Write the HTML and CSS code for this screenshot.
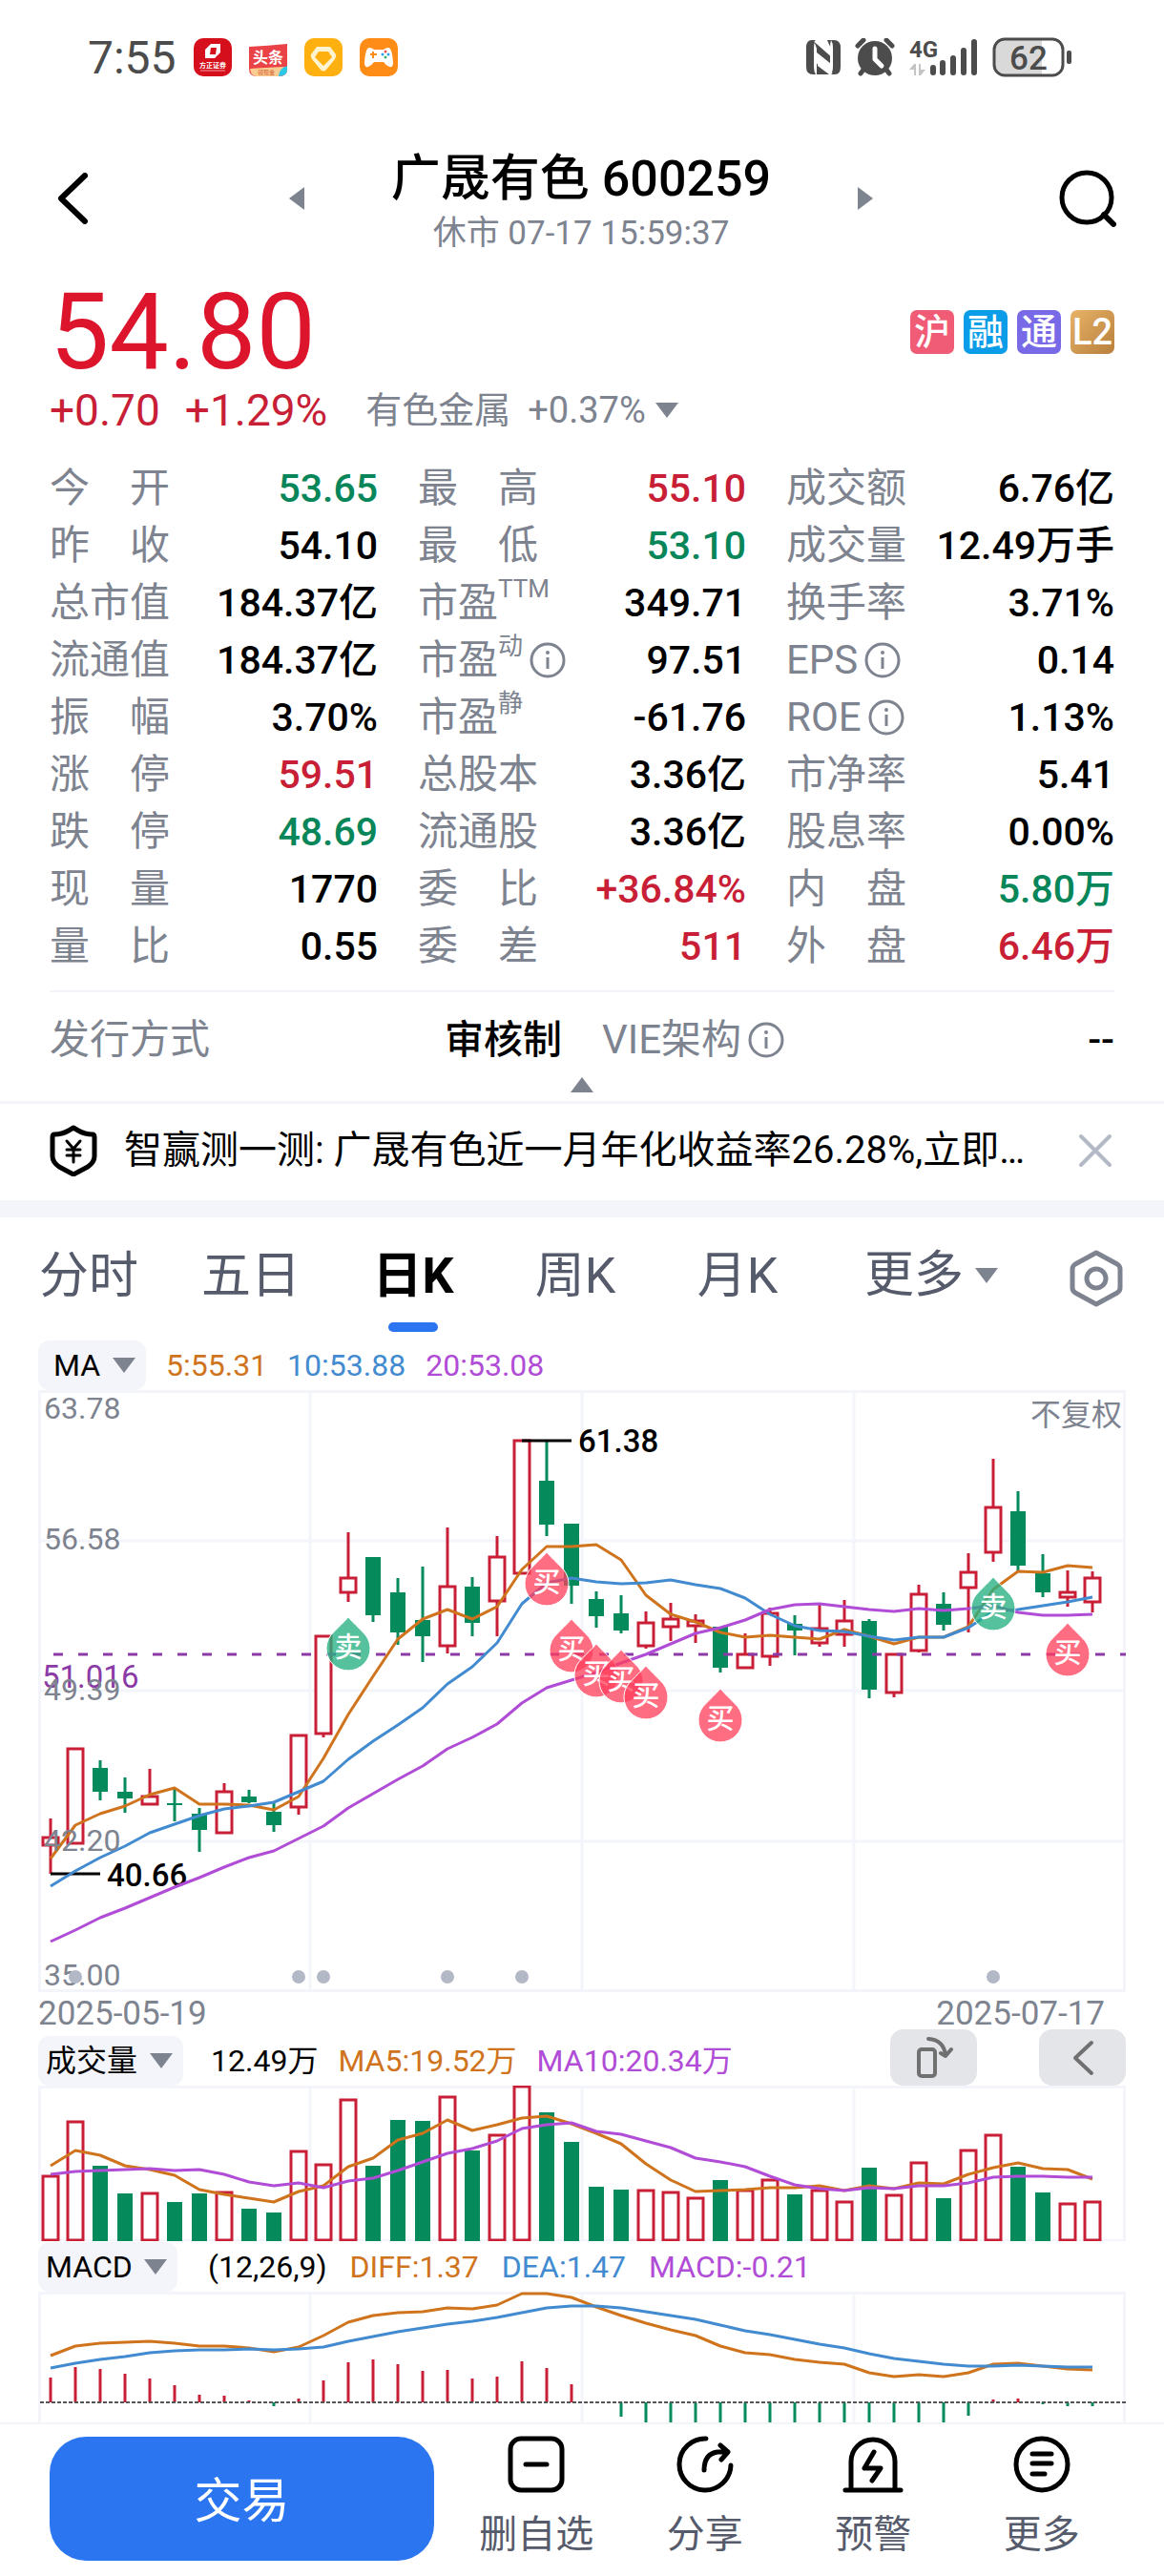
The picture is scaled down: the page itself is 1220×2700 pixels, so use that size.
FILE: index.html
```html
<!DOCTYPE html>
<html lang="zh-CN">
<head>
  <meta charset="UTF-8">
  <meta name="viewport" content="width=device-width, initial-scale=1.0">
  <title>广晟有色 600259</title>
  <link rel="stylesheet" href="styles.css">
</head>
<body>
  <div class="status-bar">
    <div class="status-left">
      <span class="clock">7:55</span>
      <svg class="app-icon" viewBox="0 0 40 40">
        <rect width="40" height="40" rx="10" fill="#d50f1c"/>
        <path d="M18 6h10v9l-6 6H12v-9z" fill="#fff"/>
        <path d="M18 10h6l-1 7h-6z" fill="#d50f1c"/>
        <text x="20" y="31" font-size="7" font-weight="700" fill="#fff" text-anchor="middle">方正证券</text>
        <path d="M7 34h26" stroke="#f3a0a5" stroke-width="1"/>
      </svg>
      <svg class="app-icon" viewBox="0 0 40 40">
        <path d="M0 9q20-1 40-3v26q0 8-8 8H8q-8 0-8-8z" fill="#ea4347"/>
        <path d="M1 32q14-1 36-2l-6 10H8q-6 0-7-8z" fill="#fbcd92"/>
        <path d="M40 29v4q0 7-9 7 0-8 9-11z" fill="#2cc8e6"/>
        <text x="20" y="26" font-size="16" font-weight="700" fill="#fff" text-anchor="middle">头条</text>
        <text x="18" y="38" font-size="6" fill="#d2572d" text-anchor="middle">领现金</text>
      </svg>
      <svg class="app-icon" viewBox="0 0 40 40">
        <rect width="40" height="40" rx="10" fill="#ffb011"/>
        <path d="M13 9h14l6 8q1 2-1 5L23 33q-3 3-6 0L8 22q-2-3-1-5z" fill="#fff3d0"/>
        <path d="M15 14h10l4 6-9 9-9-9z" fill="#ffb011"/>
      </svg>
      <svg class="app-icon" viewBox="0 0 40 40">
        <rect width="40" height="40" rx="10" fill="#ff8c16"/>
        <path d="M10 10q3 0 5 2h10q2-2 5-2 4 0 5 16 0 5-4 4-3-1-6-5H15q-3 4-6 5-4 1-4-4 1-16 5-16z" fill="#fff"/>
        <path d="M14 14v7M11 17h7" stroke="#ff8c16" stroke-width="2"/>
        <circle cx="27" cy="14" r="1.5" fill="#f0554b"/><circle cx="30" cy="17" r="1.5" fill="#2aa3e8"/>
        <circle cx="24" cy="17" r="1.5" fill="#2aa3e8"/><circle cx="27" cy="20" r="1.5" fill="#35b66b"/>
      </svg>
    </div>
    <div class="status-right">
      <svg width="36" height="38" viewBox="0 0 36 38">
        <path d="M6 1h4q-2 3-2 9v19q0 5 2 8H7q-7 0-7-8V9q0-8 6-8z" fill="#4c4c4c"/>
        <path d="M30 37h-4q2-3 2-9V9q0-5-2-8h3q7 0 7 8v20q0 8-6 8z" fill="#4c4c4c"/>
        <path d="M8 1l18 16v-7l-4-9h4q-1 3-1 9v17L12 17v11l12 9H11V10z" fill="#4c4c4c"/>
        <path d="M9 2l17 15V8M27 36L12 25V16l15 12" stroke="#fff" stroke-width="2" fill="none"/>
      </svg>
      <svg width="42" height="40" viewBox="0 0 42 40">
        <circle cx="21" cy="21" r="18" fill="#4c4c4c"/>
        <path d="M3 8l6-6M39 8l-6-6M9 33l-3 4M33 33l3 4" stroke="#4c4c4c" stroke-width="5" stroke-linecap="round"/>
        <path d="M21 11v11l7 7" stroke="#fff" stroke-width="5" fill="none" stroke-linecap="round" stroke-linejoin="round"/>
      </svg>
      <svg width="72" height="42" viewBox="0 0 72 42">
        <text x="0" y="21" font-size="24" font-weight="700" fill="#4c4c4c">4G</text>
        <path d="M0 34l5-6h2v12H5v-6zM17 34l-5 6h-2V28h2v6z" fill="#c4c4c4"/>
        <path d="M25 37v-5M35 37V27M46 37V22M57 37V14M68 37V5" stroke="#4c4c4c" stroke-width="6" stroke-linecap="round"/>
      </svg>
      <svg width="84" height="44" viewBox="0 0 84 44">
        <path d="M12 3h40v38H12q-10 0-10-10V13q0-10 10-10z" fill="#d9d9d9"/>
        <rect x="2" y="3" width="72" height="38" rx="11" fill="none" stroke="#4c4c4c" stroke-width="3"/>
        <rect x="78" y="15" width="5" height="14" rx="2" fill="#4c4c4c"/>
        <text x="38" y="35" font-size="35" font-weight="500" fill="#4c4c4c" text-anchor="middle">62</text>
      </svg>
    </div>
  </div>

  <header class="header">
    <button class="icon-btn" aria-label="返回">
      <svg width="32" height="54" viewBox="0 0 32 54"><path d="M29 3L4 27l25 24" fill="none" stroke="#000" stroke-width="6" stroke-linecap="round" stroke-linejoin="round"/></svg>
    </button>
    <div class="header-center">
      <button class="icon-btn" aria-label="上一只"><span class="tri tri-left"></span></button>
      <div class="title-block">
        <h1>广晟有色 600259</h1>
        <p>休市 07-17 15:59:37</p>
      </div>
      <button class="icon-btn" aria-label="下一只"><span class="tri tri-right"></span></button>
    </div>
    <button class="icon-btn" aria-label="搜索">
      <svg width="60" height="60" viewBox="0 0 60 60"><circle cx="29" cy="29" r="26" fill="none" stroke="#000" stroke-width="5"/><path d="M47 47l10 10" stroke="#000" stroke-width="6" stroke-linecap="round"/></svg>
    </button>
  </header>

  <section class="quote">
    <div class="price-row">
      <span class="price">54.80</span>
      <div class="tags">
        <span class="tag tag-hu">沪</span>
        <span class="tag tag-rong">融</span>
        <span class="tag tag-tong">通</span>
        <span class="tag tag-l2">L2</span>
      </div>
    </div>
    <div class="change-row">
      <span class="change">+0.70</span>
      <span class="change">+1.29%</span>
      <button class="sector">有色金属 <span>+0.37%</span><span class="tri tri-down"></span></button>
    </div>

    <div class="stats">
      <dl><dt>今　开</dt><dd class="down">53.65</dd></dl>
      <dl><dt>最　高</dt><dd class="up">55.10</dd></dl>
      <dl><dt>成交额</dt><dd>6.76亿</dd></dl>
      <dl><dt>昨　收</dt><dd>54.10</dd></dl>
      <dl><dt>最　低</dt><dd class="down">53.10</dd></dl>
      <dl><dt>成交量</dt><dd>12.49万手</dd></dl>
      <dl><dt>总市值</dt><dd>184.37亿</dd></dl>
      <dl><dt>市盈<sup>TTM</sup></dt><dd>349.71</dd></dl>
      <dl><dt>换手率</dt><dd>3.71%</dd></dl>
      <dl><dt>流通值</dt><dd>184.37亿</dd></dl>
      <dl><dt>市盈<sup>动</sup><svg class="info" viewBox="0 0 38 38"><use href="#info"/></svg></dt><dd>97.51</dd></dl>
      <dl><dt>EPS<svg class="info" viewBox="0 0 38 38"><use href="#info"/></svg></dt><dd>0.14</dd></dl>
      <dl><dt>振　幅</dt><dd>3.70%</dd></dl>
      <dl><dt>市盈<sup>静</sup></dt><dd>-61.76</dd></dl>
      <dl><dt>ROE<svg class="info" viewBox="0 0 38 38"><use href="#info"/></svg></dt><dd>1.13%</dd></dl>
      <dl><dt>涨　停</dt><dd class="up">59.51</dd></dl>
      <dl><dt>总股本</dt><dd>3.36亿</dd></dl>
      <dl><dt>市净率</dt><dd>5.41</dd></dl>
      <dl><dt>跌　停</dt><dd class="down">48.69</dd></dl>
      <dl><dt>流通股</dt><dd>3.36亿</dd></dl>
      <dl><dt>股息率</dt><dd>0.00%</dd></dl>
      <dl><dt>现　量</dt><dd>1770</dd></dl>
      <dl><dt>委　比</dt><dd class="up">+36.84%</dd></dl>
      <dl><dt>内　盘</dt><dd class="down">5.80万</dd></dl>
      <dl><dt>量　比</dt><dd>0.55</dd></dl>
      <dl><dt>委　差</dt><dd class="up">511</dd></dl>
      <dl><dt>外　盘</dt><dd class="up">6.46万</dd></dl>
    </div>

    <div class="issue">
      <dl><dt>发行方式</dt><dd>审核制</dd></dl>
      <dl><dt>VIE架构<svg class="info" viewBox="0 0 38 38"><use href="#info"/></svg></dt><dd>--</dd></dl>
    </div>
    <button class="icon-btn collapse" aria-label="收起"><span class="tri tri-up"></span></button>
  </section>

  <div class="banner">
    <svg width="50" height="54" viewBox="0 0 50 54" fill="none" stroke="#000" stroke-linecap="round" stroke-linejoin="round">
      <path d="M25 3l5 3q7 4 15 4 2 0 2 3v20q0 6-7 11L25 52 10 44q-7-5-7-11V13q0-3 2-3 8 0 15-4z" stroke-width="5"/>
      <path d="M18 17l7 8 7-8M25 25v14M18 26h14M18 32h14" stroke-width="3"/>
    </svg>
    <a href="#">智赢测一测: 广晟有色近一月年化收益率26.28%,立即…</a>
    <button class="icon-btn" aria-label="关闭">
      <svg width="36" height="36" viewBox="0 0 36 36"><path d="M3 3l30 30M33 3L3 33" stroke="#b3b9c6" stroke-width="4" stroke-linecap="round"/></svg>
    </button>
  </div>

  <nav class="tabs">
    <button class="tab">分时</button>
    <button class="tab">五日</button>
    <button class="tab active">日K</button>
    <button class="tab">周K</button>
    <button class="tab">月K</button>
    <button class="tab tab-more">更多<span class="tri tri-down"></span></button>
    <button class="icon-btn settings" aria-label="设置">
      <svg width="56" height="60" viewBox="0 0 56 60" fill="none" stroke="#7e8390" stroke-width="5" stroke-linejoin="round"><path d="M28 3l22 12q3 2 3 5v20q0 3-3 5L28 57 6 45q-3-2-3-5V20q0-3 3-5z"/><circle cx="28" cy="30" r="10"/></svg>
    </button>
  </nav>

  <main class="charts">
    <div class="legend legend-tight">
      <label class="pill pill-ma"><select aria-label="主图指标"><option>MA</option></select><span class="tri tri-down"></span></label>
      <span class="c-orange">5:55.31</span>
      <span class="c-blue">10:53.88</span>
      <span class="c-purple">20:53.08</span>
    </div>
    <svg class="plot" id="kline" viewBox="0 0 1140 631">
      <path class="grid" d="M1.5 1.5h1137v628h-1137zM285 1v629M570 1v629M855 1v629M1 158h1138M1 315h1138M1 473h1138"/>
    </svg>
    <div class="dates"><span>2025-05-19</span><span>2025-07-17</span></div>

    <div class="legend legend-tight legend-vol">
      <label class="pill"><select aria-label="副图指标"><option>成交量</option></select><span class="tri tri-down"></span></label>
      <span>12.49万</span>
      <span class="c-orange">MA5:19.52万</span>
      <span class="c-purple">MA10:20.34万</span>
      <div class="tools">
        <button aria-label="横屏">
          <svg width="40" height="46" viewBox="0 0 40 46" fill="none" stroke="#707070" stroke-width="4" stroke-linecap="round" stroke-linejoin="round"><rect x="4" y="14" width="17" height="28" rx="3"/><path d="M14 3q16 1 18 17M27 18l5 3 6-7"/></svg>
        </button>
        <button aria-label="展开">
          <svg width="24" height="38" viewBox="0 0 24 38" fill="none" stroke="#707070" stroke-width="4" stroke-linecap="round" stroke-linejoin="round"><path d="M21 3L4 19l17 16"/></svg>
        </button>
      </div>
    </div>
    <svg class="plot" id="volume" viewBox="0 0 1140 163">
      <path class="grid" d="M1.5 1.5h1137v161h-1137zM285 1v162M570 1v162M855 1v162"/>
    </svg>

    <div class="legend">
      <label class="pill"><select aria-label="副图指标二"><option>MACD</option></select><span class="tri tri-down"></span></label>
      <span>(12,26,9)</span>
      <span class="c-orange">DIFF:1.37</span>
      <span class="c-blue">DEA:1.47</span>
      <span class="c-purple">MACD:-0.21</span>
    </div>
    <svg class="plot" id="macd" viewBox="0 0 1140 137">
      <path class="grid" d="M1.5 140V1.5h1137V140M285 1v139M570 1v139M855 1v139"/>
    </svg>
  </main>

  <footer class="bottom-bar">
    <button class="trade">交易</button>
    <button class="action">
      <svg width="60" height="60" viewBox="0 0 60 60"><rect x="3" y="3" width="54" height="54" rx="11"/><path d="M19 30h22"/></svg>
      删自选
    </button>
    <button class="action">
      <svg width="60" height="60" viewBox="0 0 60 60"><path d="M31 3A27 27 0 1 0 57 31M29 36q0-17 14-19h10M46 10l8 7-7 8"/></svg>
      分享
    </button>
    <button class="action">
      <svg width="64" height="60" viewBox="0 0 64 60"><path d="M3 57h58M9 57V27a23 23 0 0 1 46 0v30M33 17l-10 17h17l-9 13"/></svg>
      预警
    </button>
    <button class="action">
      <svg width="60" height="60" viewBox="0 0 60 60"><circle cx="30" cy="30" r="27"/><path d="M20 19h20M20 29h20M20 40h13"/></svg>
      更多
    </button>
  </footer>

  <svg class="defs" width="0" height="0">
    <symbol id="info" viewBox="0 0 38 38">
      <circle cx="19" cy="19" r="17" fill="none" stroke="#7e8390" stroke-width="3"/>
      <circle cx="19" cy="11" r="2" fill="#7e8390"/>
      <path d="M19 16v12" stroke="#7e8390" stroke-width="3"/>
    </symbol>
  </svg>

  <script src="chart.js"></script>
</body>
</html>
```
FILE: styles.css
```css
* {
  box-sizing: border-box;
}

body {
  margin: 0;
  font-family: Roboto, "Noto Sans CJK SC", sans-serif;
  color: #000;
  background: #fff;
}

button,
select {
  padding: 0;
  border: none;
  background: none;
  font: inherit;
  color: inherit;
  cursor: pointer;
}

.icon-btn {
  display: flex;
  align-items: center;
  justify-content: center;
}

.up { color: #c81f37; }
.down { color: #07865a; }
.c-orange { color: #cf741d; }
.c-blue { color: #428bd0; }
.c-purple { color: #b04cd6; }

/* Small triangles */
.tri {
  display: inline-block;
  border: 12px solid transparent;
}

.tri-left {
  border-width: 12px 16px 12px 0;
  border-right-color: #7e8390;
}

.tri-right {
  border-width: 12px 0 12px 16px;
  border-left-color: #7e8390;
}

.tri-down {
  border-width: 16px 12px 0;
  border-top-color: #7e8390;
}

.tri-up {
  border-width: 0 12px 16px;
  border-bottom-color: #7e8390;
}

/* Status bar */
.status-bar {
  display: flex;
  justify-content: space-between;
  align-items: center;
  height: 120px;
  padding: 0 96px 0 92px;
  color: #4c4c4c;
}

.status-left {
  display: flex;
  align-items: center;
  gap: 18px;
}

.status-right {
  display: flex;
  align-items: center;
  gap: 15px;
}

.clock {
  font-size: 48px;
}

.app-icon {
  width: 40px;
  height: 40px;
}

/* Header */
.header {
  display: flex;
  justify-content: space-between;
  align-items: center;
  height: 174px;
  padding: 2px 50px 0 60px;
}

.header-center {
  display: flex;
  align-items: center;
  justify-content: space-between;
  width: 612px;
  margin-left: 16px;
}

.title-block {
  padding-top: 10px;
  text-align: center;
  color: #7e8390;
}

.title-block h1 {
  margin: 0;
  font-size: 52px;
  font-weight: 500;
  line-height: 64px;
  color: #000;
}

.title-block p {
  margin: 0;
  font-size: 35px;
  line-height: 50px;
}

/* Quote */
.quote {
  padding: 0 52px;
}

.price-row {
  display: flex;
  justify-content: space-between;
  align-items: center;
  height: 108px;
}

.price {
  font-size: 111px;
  line-height: 108px;
  color: #dc142c;
}

.tags {
  display: flex;
  gap: 10px;
}

.tag {
  width: 46px;
  height: 46px;
  border-radius: 7px;
  font-size: 38px;
  font-weight: 500;
  line-height: 46px;
  text-align: center;
  color: #fff;
}

.tag-hu { background: #f05b75; }
.tag-rong { background: #0b9de8; }
.tag-tong { background: #786ae6; }
.tag-l2 { background: linear-gradient(135deg, #e8b268, #b8803c); }

.change-row {
  display: flex;
  align-items: center;
  gap: 26px;
  height: 56px;
}

.change {
  font-size: 46px;
  color: #c81f37;
}

.sector {
  display: flex;
  align-items: center;
  gap: 18px;
  margin-left: 14px;
  font-size: 38px;
  line-height: 52px;
  color: #7e8390;
}

.sector .tri {
  margin-left: -8px;
}

.stats {
  display: grid;
  grid-template-columns: repeat(3, 1fr);
  column-gap: 42px;
  padding: 24px 0 16px;
}

.stats dl,
.issue dl {
  display: flex;
  justify-content: space-between;
  align-items: center;
  height: 60px;
  margin: 0;
  font-size: 42px;
  line-height: 60px;
}

dt {
  display: flex;
  align-items: center;
  color: #7e8390;
  white-space: nowrap;
}

dt sup {
  align-self: flex-start;
  font-size: 26px;
  line-height: 30px;
}

dd {
  margin: 0;
  font-size: 41px;
  font-weight: 500;
  white-space: nowrap;
}

.info {
  width: 38px;
  height: 38px;
  margin-left: 7px;
}

.issue {
  display: grid;
  grid-template-columns: 1fr 1fr;
  column-gap: 42px;
  padding-top: 20px;
  border-top: 2px solid #f3f4f8;
}

.collapse {
  width: 100%;
  height: 34px;
}

.defs {
  display: block;
}

/* Banner */
.banner {
  display: flex;
  align-items: center;
  gap: 28px;
  height: 122px;
  padding: 0 54px 4px 52px;
  border-top: 3px solid #f3f4f8;
  border-bottom: 18px solid #f4f5fa;
}

.banner a {
  flex: 1;
  font-size: 40px;
  line-height: 54px;
  color: #000;
  text-decoration: none;
  white-space: nowrap;
}

/* Period tabs */
.tabs {
  display: flex;
  height: 128px;
  padding-left: 8px;
}

.tab {
  display: flex;
  flex-direction: column;
  align-items: center;
  justify-content: flex-end;
  width: 170px;
  padding-bottom: 30px;
  font-size: 52px;
  line-height: 72px;
  color: #565b6c;
}

.tab.active {
  padding-bottom: 8px;
  font-weight: 700;
  color: #000;
}

.tab.active::after {
  content: "";
  width: 52px;
  height: 10px;
  margin-top: 12px;
  border-radius: 5px;
  background: #2b76f0;
}

.tab-more {
  flex: 1;
  flex-direction: row;
  justify-content: center;
  align-items: center;
  gap: 12px;
  padding-bottom: 6px;
}

.settings {
  width: 126px;
  padding: 0 16px 0 0;
}

/* Charts */
.charts {
  padding: 0 40px;
}

.legend {
  display: flex;
  align-items: center;
  gap: 24px;
  height: 53px;
  font-size: 32px;
  white-space: nowrap;
}

.legend-tight {
  gap: 21px;
}

.pill {
  display: flex;
  align-items: center;
  gap: 12px;
  height: 52px;
  margin-right: 8px;
  padding: 0 11px 0 8px;
  border-radius: 12px;
  background: #f4f5fa;
}

.pill-ma {
  margin-right: 0;
  padding-left: 16px;
}

.pill select {
  appearance: none;
  outline: none;
}

.plot {
  display: block;
  width: 100%;
  height: auto;
}

.dates {
  display: flex;
  justify-content: space-between;
  height: 39px;
  padding: 5px 22px 0 0;
  font-size: 35px;
  line-height: 36px;
  color: #7e8390;
}

.legend-vol {
  align-items: flex-end;
  height: 59px;
  line-height: 52px;
}

.tools {
  display: flex;
  gap: 65px;
  margin-left: auto;
}

.tools button {
  display: flex;
  align-items: center;
  justify-content: center;
  width: 91px;
  height: 59px;
  border-radius: 14px;
  background: #e4e5e9;
}

.grid {
  fill: none;
  stroke: #f4f5fa;
  stroke-width: 3;
}

.bar-up {
  fill: #fff;
  stroke: #c81f37;
  stroke-width: 3;
}

.bar-down {
  fill: #058a5c;
  stroke: none;
}

.wick-up {
  stroke: #c81f37;
  stroke-width: 3;
}

.wick-down {
  stroke: #058a5c;
  stroke-width: 3;
}

.line {
  fill: none;
  stroke-width: 3;
  stroke-linejoin: round;
}

.line-orange { stroke: #cf741d; }
.line-blue { stroke: #428bd0; }
.line-purple { stroke: #b04cd6; }

.cost-line {
  stroke: #8b3aa6;
  stroke-width: 3;
  stroke-dasharray: 10 16;
}

.zero-line {
  stroke: #555;
  stroke-width: 2;
  stroke-dasharray: 4 2;
}

.mark-line {
  stroke: #000;
  stroke-width: 3;
}

.axis-text {
  font-size: 32px;
  fill: #7e8390;
}

.cost-text {
  font-size: 33px;
  fill: #8b3aa6;
}

.mark-text {
  font-size: 33px;
  font-weight: 500;
  fill: #000;
}

.event-dot {
  fill: #b2b8c6;
}

.drop {
  stroke: #fff;
  stroke-width: 1;
}

.drop-buy {
  fill: rgba(255, 60, 90, 0.75);
}

.drop-sell {
  fill: rgba(38, 176, 130, 0.78);
}

.drop-text {
  font-size: 29px;
  font-weight: 500;
  fill: #fff;
  text-anchor: middle;
}

/* Bottom bar */
.bottom-bar {
  display: flex;
  align-items: center;
  height: 160px;
  padding: 0 40px 2px 52px;
  border-top: 2px solid #f3f4f8;
}

.trade {
  width: 403px;
  height: 130px;
  padding-bottom: 4px;
  margin-right: 19px;
  border-radius: 38px;
  font-size: 50px;
  color: #fff;
  background: #2b76f0;
}

.action {
  display: flex;
  flex: 1;
  flex-direction: column;
  align-items: center;
  gap: 16px;
  font-size: 40px;
  line-height: 56px;
  color: #565b6c;
}

.action svg {
  fill: none;
  stroke: #000;
  stroke-width: 5;
  stroke-linecap: round;
  stroke-linejoin: round;
}
```
FILE: chart.js
```js
// Plot units: one candle every 26, first centre at 13, y grows downward
const NS = 'http://www.w3.org/2000/svg';
const STEP = 26;
const x = i => 13 + i * STEP;

// [up, high, body top, body bottom, low, volume top]
const candles = [
  [1, 449, 468, 478, 507, 94], [1, 375, 375, 476, 476, 37], [0, 388, 396, 421, 430, 84],
  [0, 406, 421, 428, 443, 113], [1, 397, 425, 435, 435, 112], [0, 417, 433, 435, 452, 122],
  [0, 438, 444, 461, 484, 113], [1, 412, 420, 465, 465, 111], [0, 419, 426, 432, 433, 129],
  [0, 433, 442, 456, 463, 133], [1, 361, 361, 438, 445, 68], [1, 257, 257, 361, 364, 82],
  [1, 149, 196, 213, 222, 14], [0, 175, 175, 236, 243, 84], [0, 197, 212, 254, 267, 36],
  [0, 185, 241, 258, 285, 37], [1, 144, 205, 269, 276, 11], [0, 196, 206, 244, 258, 68],
  [1, 153, 174, 222, 258, 51], [1, 52, 52, 193, 193, 0], [0, 52, 95, 141, 153, 28],
  [0, 140, 140, 205, 224, 59], [0, 211, 219, 237, 249, 106], [0, 215, 234, 252, 255, 109],
  [1, 232, 243, 269, 271, 109], [1, 223, 239, 249, 263, 111], [1, 235, 241, 248, 265, 117],
  [0, 248, 248, 291, 296, 99], [1, 255, 276, 292, 292, 109], [1, 228, 233, 280, 289, 98],
  [0, 236, 245, 252, 278, 114], [1, 225, 249, 266, 269, 109], [1, 220, 241, 257, 269, 121],
  [0, 240, 242, 314, 323, 86], [1, 276, 276, 318, 322, 114], [1, 204, 213, 274, 275, 80],
  [0, 212, 224, 246, 252, 118], [1, 171, 190, 208, 254, 67], [1, 72, 122, 171, 180, 51],
  [0, 106, 127, 184, 190, 85], [0, 172, 192, 212, 217, 112], [1, 189, 211, 218, 227, 123],
  [1, 190, 196, 223, 233, 121]
];

const ma5 = [491, 456, 444, 436, 424, 417, 434, 434, 435, 440, 426, 386, 340, 300, 261, 240, 230, 240, 227, 188, 164, 164, 162, 178, 215, 235, 243, 254, 259, 257, 259, 261, 251, 258, 266, 259, 259, 248, 209, 190, 191, 184, 186];
const ma10 = [520, 504, 490, 478, 464, 455, 446, 439, 436, 432, 421, 410, 387, 368, 351, 333, 308, 290, 265, 224, 202, 197, 201, 203, 202, 199, 204, 208, 218, 235, 247, 252, 253, 258, 262, 259, 259, 249, 232, 230, 226, 222, 217];
const ma20 = [578, 566, 553, 543, 532, 521, 511, 500, 490, 483, 470, 457, 438, 423, 408, 394, 376, 364, 350, 328, 312, 304, 296, 286, 277, 266, 255, 249, 241, 230, 225, 224, 227, 230, 232, 229, 231, 229, 226, 233, 236, 236, 235];

const vol5 = [84, 68, 73, 84, 88, 94, 109, 114, 118, 122, 111, 105, 85, 76, 57, 50, 36, 47, 41, 34, 32, 40, 50, 61, 82, 99, 111, 110, 109, 107, 107, 105, 110, 105, 108, 102, 103, 93, 86, 81, 87, 88, 98];
const vol10 = [93, 90, 89, 88, 87, 89, 88, 93, 101, 105, 102, 107, 100, 97, 89, 80, 71, 66, 58, 45, 41, 39, 48, 51, 58, 65, 76, 80, 85, 95, 104, 108, 110, 107, 108, 105, 105, 102, 96, 95, 95, 96, 96];

const diff = [67, 57, 54, 53, 52, 54, 57, 57, 59, 63, 58, 46, 32, 25, 22, 21, 17, 18, 14, 2, 2, 6, 16, 25, 33, 40, 46, 57, 64, 66, 71, 74, 76, 85, 89, 87, 89, 85, 76, 75, 78, 81, 82];
const dea = [80, 75, 71, 68, 64, 62, 61, 61, 60, 61, 60, 58, 52, 47, 42, 38, 34, 31, 27, 22, 17, 15, 15, 17, 21, 25, 29, 35, 41, 45, 50, 55, 59, 65, 70, 73, 76, 78, 78, 77, 78, 79, 79];
const hist = [90, 79, 81, 86, 91, 98, 108, 109, 114, 120, 112, 93, 74, 71, 76, 83, 82, 91, 89, 73, 80, 97, 116, 131, 140, 140, 140, 140, 140, 140, 140, 140, 140, 140, 140, 140, 140, 130, 113, 112, 118, 120, 120];

// [candle index, tip y, label]
const trades = [
  [12, 238, '卖'], [20, 170, '买'], [21, 240, '买'], [22, 266, '买'], [23, 272, '买'],
  [24, 289, '买'], [27, 313, '买'], [38, 196, '卖'], [41, 244, '买']
];

function add(svg, name, cls, attrs, text) {
  const el = document.createElementNS(NS, name);
  el.setAttribute('class', cls);
  for (const key in attrs) el.setAttribute(key, attrs[key]);
  if (text) el.textContent = text;
  svg.appendChild(el);
}

function vline(svg, cls, cx, y1, y2) {
  add(svg, 'line', cls, { x1: cx, x2: cx, y1: y1, y2: y2 });
}

function bar(svg, up, cx, top, bottom) {
  if (up) {
    add(svg, 'rect', 'bar-up', { x: cx - 8, y: top + 1, width: 16, height: Math.max(bottom - top - 2, 2) });
  } else {
    add(svg, 'rect', 'bar-down', { x: cx - 8, y: top, width: 16, height: bottom - top });
  }
}

function line(svg, color, values) {
  add(svg, 'polyline', 'line line-' + color, { points: values.map((v, i) => x(i) + ',' + v).join(' ') });
}

function drawKline() {
  const svg = document.getElementById('kline');
  candles.forEach(([up, high, top, bottom, low], i) => {
    vline(svg, up ? 'wick-up' : 'wick-down', x(i), high, low);
    bar(svg, up, x(i), top, bottom);
  });
  add(svg, 'line', 'cost-line', { x1: 16, x2: 1140, y1: 277, y2: 277 });
  add(svg, 'line', 'mark-line', { x1: 507, x2: 559, y1: 53, y2: 53 });
  add(svg, 'line', 'mark-line', { x1: 13, x2: 65, y1: 507, y2: 507 });
  add(svg, 'text', 'mark-text', { x: 566, y: 65 }, '61.38');
  add(svg, 'text', 'mark-text', { x: 72, y: 520 }, '40.66');
  line(svg, 'orange', ma5);
  line(svg, 'blue', ma10);
  line(svg, 'purple', ma20);
  add(svg, 'text', 'cost-text', { x: 4, y: 312 }, '51.016');
  [[30, '63.78'], [167, '56.58'], [325, '49.39'], [483, '42.20'], [624, '35.00']].forEach(([y, label]) => {
    add(svg, 'text', 'axis-text', { x: 6, y: y }, label);
  });
  add(svg, 'text', 'axis-text', { x: 1136, y: 37, 'text-anchor': 'end' }, '不复权');
  [1, 10, 11, 16, 19, 38].forEach(i => add(svg, 'circle', 'event-dot', { cx: x(i), cy: 615, r: 7 }));
  trades.forEach(([i, y, label]) => {
    add(svg, 'path', label === '买' ? 'drop drop-buy' : 'drop drop-sell', {
      d: `M${x(i)} ${y}c6 7 10 10 15 15.5a23 23 0 1 1-30 0c5-5.5 9-8.5 15-15.5z`
    });
    add(svg, 'text', 'drop-text', { x: x(i), y: y + 42 }, label);
  });
}

function drawVolume() {
  const svg = document.getElementById('volume');
  candles.forEach((c, i) => bar(svg, c[0], x(i), c[5], 163));
  line(svg, 'orange', vol5);
  line(svg, 'purple', vol10);
}

function drawMacd() {
  const svg = document.getElementById('macd');
  hist.forEach((v, i) => vline(svg, v < 116 ? 'wick-up' : 'wick-down', x(i), 116, v));
  add(svg, 'line', 'zero-line', { x1: 2, x2: 1140, y1: 116, y2: 116 });
  line(svg, 'orange', diff);
  line(svg, 'blue', dea);
}

drawKline();
drawVolume();
drawMacd();
```
